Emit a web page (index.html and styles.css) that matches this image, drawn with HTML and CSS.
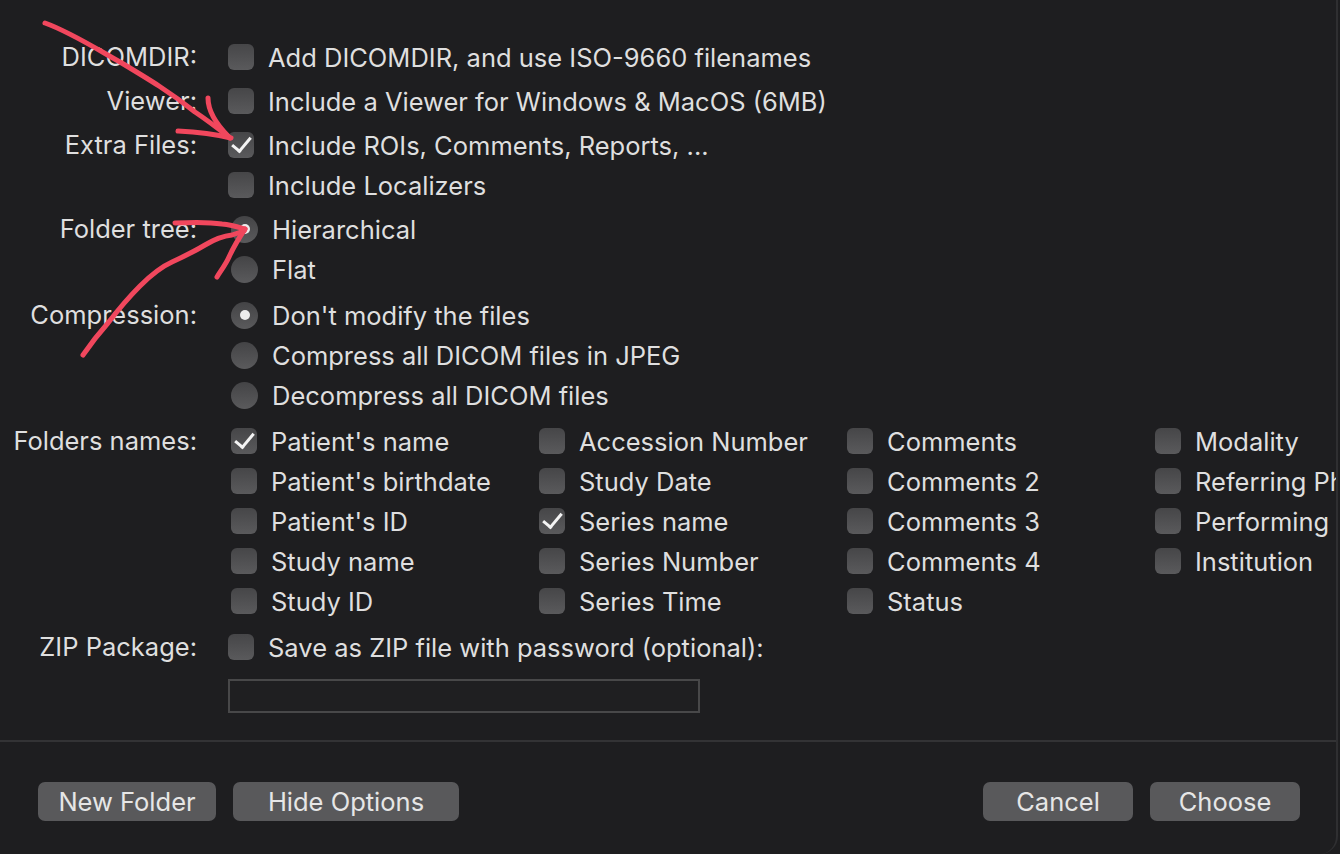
FILE: index.html
```html
<!DOCTYPE html>
<html lang="en">
<head>
    <meta charset="UTF-8">
    <title>Export Options</title>
    <link rel="stylesheet" href="styles.css">
</head>
<body>
<div class="window">
    <div class="options">
        <div class="group">
            <div class="label">DICOMDIR:</div>
            <div class="items">
                <div class="item"><span class="check"></span>Add DICOMDIR, and use ISO-9660 filenames</div>
            </div>
        </div>
        <div class="group">
            <div class="label">Viewer:</div>
            <div class="items">
                <div class="item"><span class="check"></span>Include a Viewer for Windows &amp; MacOS (6MB)</div>
            </div>
        </div>
        <div class="group">
            <div class="label">Extra Files:</div>
            <div class="items">
                <div class="item"><span class="check on"></span>Include ROIs, Comments, Reports, ...</div>
                <div class="item"><span class="check"></span>Include Localizers</div>
            </div>
        </div>
        <div class="group">
            <div class="label">Folder tree:</div>
            <div class="items shifted">
                <div class="item"><span class="radio on"></span>Hierarchical</div>
                <div class="item"><span class="radio"></span>Flat</div>
            </div>
        </div>
        <div class="group wide">
            <div class="label">Compression:</div>
            <div class="items shifted">
                <div class="item"><span class="radio on"></span>Don't modify the files</div>
                <div class="item"><span class="radio"></span>Compress all DICOM files in JPEG</div>
                <div class="item"><span class="radio"></span>Decompress all DICOM files</div>
            </div>
        </div>
        <div class="group wide">
            <div class="label">Folders names:</div>
            <div class="items shifted names">
                <div class="item"><span class="check on"></span>Patient's name</div>
                <div class="item"><span class="check"></span>Accession Number</div>
                <div class="item"><span class="check"></span>Comments</div>
                <div class="item"><span class="check"></span>Modality</div>
                <div class="item"><span class="check"></span>Patient's birthdate</div>
                <div class="item"><span class="check"></span>Study Date</div>
                <div class="item"><span class="check"></span>Comments 2</div>
                <div class="item"><span class="check"></span>Referring Physician</div>
                <div class="item"><span class="check"></span>Patient's ID</div>
                <div class="item"><span class="check on"></span>Series name</div>
                <div class="item"><span class="check"></span>Comments 3</div>
                <div class="item"><span class="check"></span>Performing Physician</div>
                <div class="item"><span class="check"></span>Study name</div>
                <div class="item"><span class="check"></span>Series Number</div>
                <div class="item"><span class="check"></span>Comments 4</div>
                <div class="item"><span class="check"></span>Institution</div>
                <div class="item"><span class="check"></span>Study ID</div>
                <div class="item"><span class="check"></span>Series Time</div>
                <div class="item"><span class="check"></span>Status</div>
            </div>
        </div>
        <div class="group wide">
            <div class="label">ZIP Package:</div>
            <div class="items">
                <div class="item"><span class="check"></span>Save as ZIP file with password (optional):</div>
                <div class="field"></div>
            </div>
        </div>
    </div>

    <div class="separator"></div>

    <div class="buttons">
        <div class="left">
            <div class="button folder">New Folder</div>
            <div class="button hide">Hide Options</div>
        </div>
        <div class="right">
            <div class="button action">Cancel</div>
            <div class="button action">Choose</div>
        </div>
    </div>

    <!-- red annotation arrows drawn on top -->
    <svg class="marks" width="1340" height="854" viewBox="0 0 1340 854">
        <path d="M45 23 C70 32 95 48 120 62 C150 80 170 92 195 112 C210 122 220 130 230 138"/>
        <path d="M178 131 C200 132 215 134 231 138"/>
        <path d="M208 98 C208 110 214 122 229 137"/>
        <path d="M83 355 C92 342 100 332 108 323 C118 310 128 298 140 286 C152 274 163 266 172 262 C185 256 195 251 205 245 C215 239 222 236 232 235 L244 231"/>
        <path d="M175 223 C195 222 210 222 222 224 C232 225 238 227 245 229"/>
        <path d="M217 277 C220 272 226 264 229 257 C234 246 239 238 245 229"/>
    </svg>
</div>
</body>
</html>
```

FILE: styles.css
```css
html, body {
    margin: 0;
    padding: 0;
}
body {
    background-color: #1e1e20;
    color: #dfdfdf;
    font-family: Inter, "Noto Sans", sans-serif;
    font-size: 25.5px;
    overflow: hidden;
}
.window {
    position: relative;
    width: 1338px;
    height: 854px;
    border-right: 2px solid #2f2f31;
    border-bottom-right-radius: 18px;
    box-sizing: border-box;
    overflow: hidden;
}
.options {
    padding-top: 37px;
    display: flex;
    flex-direction: column;
    gap: 4px;
}
.group {
    display: grid;
    grid-template-columns: 197px 1fr;
    column-gap: 31px;
}
.group.wide {
    margin-top: 2px;
}
.label {
    text-align: right;
    height: 40px;
    line-height: 40px;
    white-space: nowrap;
}
.items.shifted {
    padding-left: 3px;
}
.item {
    display: flex;
    align-items: center;
    height: 40px;
    white-space: nowrap;
}
.names {
    display: grid;
    grid-template-columns: repeat(4, 308px);
}
.check {
    width: 26px;
    height: 26px;
    border-radius: 6px;
    background: linear-gradient(#464648, #5a5a5c);
    margin-right: 14px;
    flex-shrink: 0;
    display: flex;
    align-items: center;
    justify-content: center;
}
.check.on::after {
    content: "";
    width: 8px;
    height: 16px;
    border-right: 3.5px solid #f4f4f4;
    border-bottom: 3.5px solid #f4f4f4;
    transform: rotate(40deg);
    margin-top: -5px;
}
.radio {
    width: 27px;
    height: 27px;
    border-radius: 50%;
    background: linear-gradient(#444446, #5a5a5c);
    margin-right: 14px;
    flex-shrink: 0;
    display: flex;
    align-items: center;
    justify-content: center;
}
.radio.on::after {
    content: "";
    width: 10px;
    height: 10px;
    border-radius: 50%;
    background-color: #ececec;
}
.field {
    width: 472px;
    height: 34px;
    box-sizing: border-box;
    border: 2px solid #484849;
    background-color: #1f1f21;
    margin-top: 12px;
}
.separator {
    height: 2px;
    background-color: #333335;
    margin-top: 27px;
}
.buttons {
    display: flex;
    justify-content: space-between;
    padding: 40px 36px 0 38px;
}
.left, .right {
    display: flex;
    gap: 17px;
}
.button {
    height: 39px;
    line-height: 39px;
    border-radius: 7px;
    background-color: #59595b;
    color: #e6e6e6;
    text-align: center;
    box-sizing: border-box;
    white-space: nowrap;
}
.button.folder {
    width: 178px;
}
.button.hide {
    width: 226px;
}
.button.action {
    width: 150px;
}
.marks {
    position: absolute;
    left: 0;
    top: 0;
    pointer-events: none;
}
.marks path {
    fill: none;
    stroke: #f1475d;
    stroke-width: 5;
    stroke-linecap: round;
    stroke-linejoin: round;
}
```
